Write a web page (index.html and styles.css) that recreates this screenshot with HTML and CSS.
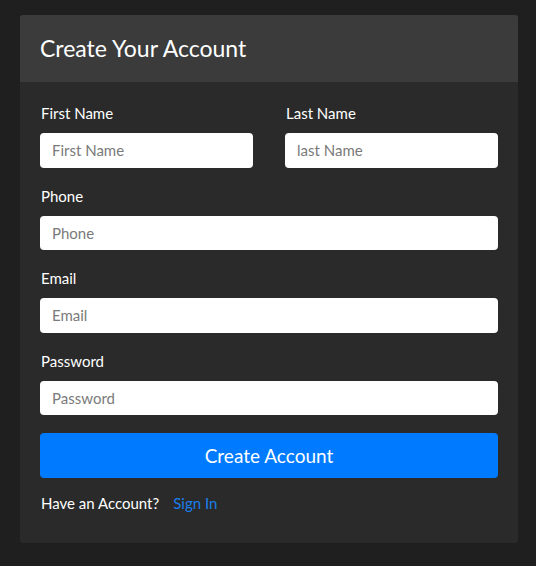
FILE: index.html
```html
<!DOCTYPE html>
<html>
<head>
<meta charset="utf-8">
<link rel="stylesheet" href="styles.css">
</head>
<body>
<div class="card">
  <div class="card-header">
    <h1 class="title">Create Your Account</h1>
  </div>
  <form class="card-body">
    <div class="row">
      <div class="group">
        <label class="label">First Name</label>
        <input class="input" type="text" placeholder="First Name">
      </div>
      <div class="group">
        <label class="label">Last Name</label>
        <input class="input" type="text" placeholder="last Name">
      </div>
    </div>
    <div class="group">
      <label class="label">Phone</label>
      <input class="input" type="text" placeholder="Phone">
    </div>
    <div class="group">
      <label class="label">Email</label>
      <input class="input" type="text" placeholder="Email">
    </div>
    <div class="group">
      <label class="label">Password</label>
      <input class="input" type="password" placeholder="Password">
    </div>
    <button class="btn" type="button">Create Account</button>
    <div class="footer">
      <span class="footer-text">Have an Account?</span>
      <a class="link" href="#">Sign In</a>
    </div>
  </form>
</div>
</body>
</html>
```
FILE: styles.css
```css
html, body {
  margin: 0;
  padding: 0;
}
body {
  background: #1f1f1f;
  font-family: Lato, "Open Sans", sans-serif;
  color: #fff;
  padding: 15px 0 0 20px;
  height: 566px;
  box-sizing: border-box;
}
.card {
  width: 498px;
  background: #2a2a2a;
  border-radius: 3px;
  overflow: hidden;
}
.card-header {
  background: #3b3b3b;
  height: 67px;
  display: flex;
  align-items: center;
  padding: 0 20px;
}
.title {
  margin: 0;
  font-size: 23px;
  font-weight: 400;
  line-height: 1;
  color: #fff;
}
.card-body {
  padding: 21px 20px 30px 20px;
  display: flex;
  flex-direction: column;
  gap: 18px;
}
.row {
  display: grid;
  grid-template-columns: 1fr 1fr;
  column-gap: 32px;
}
.group {
  display: flex;
  flex-direction: column;
  gap: 10px;
}
.label {
  font-size: 15px;
  line-height: 20px;
  color: #fff;
  padding-left: 1px;
}
.input {
  height: 34.5px;
  box-sizing: border-box;
  border: none;
  border-radius: 4px;
  background: #fff;
  padding: 0 12px;
  font-family: Lato, "Open Sans", sans-serif;
  font-size: 15px;
  color: #333;
  margin: 0;
  width: 100%;
}
.input::placeholder {
  color: #7a7a7a;
}
.btn {
  height: 45px;
  border: none;
  border-radius: 4px;
  background: #007bff;
  color: #fff;
  font-family: Lato, "Open Sans", sans-serif;
  font-size: 19px;
  margin: 0;
  padding: 0;
}
.footer {
  display: flex;
  align-items: center;
  gap: 14px;
  font-size: 15px;
  line-height: 20px;
  margin-top: -3px;
  padding-left: 1px;
}
.link {
  color: #1a7fe8;
  text-decoration: none;
}
```
